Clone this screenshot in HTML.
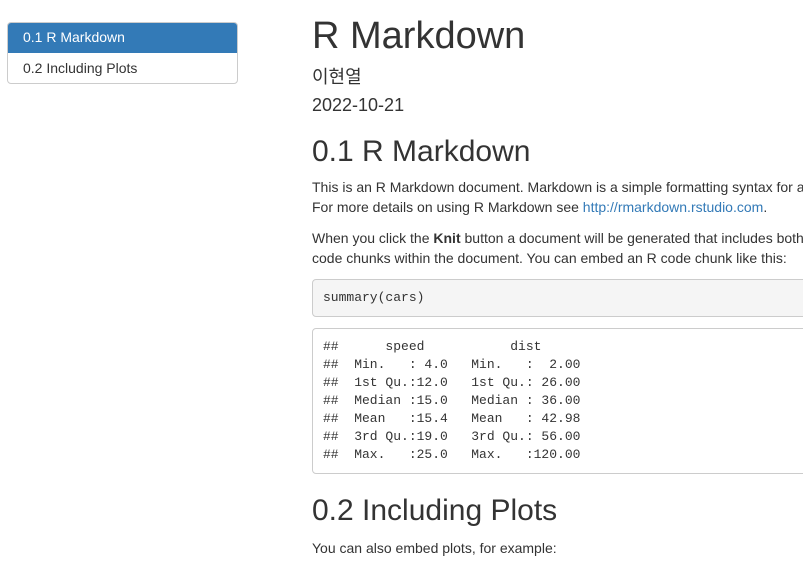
<!DOCTYPE html>
<html><head><meta charset="utf-8"><style>
html,body{margin:0;padding:0;width:803px;height:565px;overflow:hidden;background:#fff;}
body{font-family:"Liberation Sans","Noto Sans CJK KR",sans-serif;color:#333;font-size:14px;position:relative;}
.toc{position:absolute;left:7px;top:22px;width:229px;border:1px solid #ccc;border-radius:4px;overflow:hidden;}
.toc div{height:30px;line-height:30px;padding-left:15px;font-size:14px;}
.toc .a{background:#337ab7;color:#fff;border-bottom:1px solid #337ab7;height:29px;line-height:29px}
.main{position:absolute;left:312px;top:0;width:491px;height:565px;overflow:hidden;}
.t{position:absolute;white-space:nowrap;margin:0;}
pre{position:absolute;margin:0;background:#f5f5f5;border:1px solid #ccc;border-radius:4px;font-family:"Liberation Mono",monospace;font-size:13px;line-height:18px;color:#333;padding:9px 10px;width:700px;}
a{color:#337ab7;text-decoration:none}
</style></head><body>
<div class="toc"><div class="a">0.1 R Markdown</div><div>0.2 Including Plots</div></div>
<div class="main">
<div class="t" style="top:14px;font-size:38px;line-height:44px;font-weight:normal">R Markdown</div>
<div class="t" style="top:65px;font-size:18px;line-height:24px">이현열</div>
<div class="t" style="top:93px;font-size:18px;line-height:24px">2022-10-21</div>
<div class="t" style="top:134px;font-size:30px;line-height:36px">0.1 R Markdown</div>
<div class="t" style="top:177px;line-height:20px">This is an R Markdown document. Markdown is a simple formatting syntax for authoring HTML, PDF, and MS Word documents.<br>For more details on using R Markdown see <a>http://rmarkdown.rstudio.com</a>.</div>
<div class="t" style="top:228px;line-height:20px">When you click the <b>Knit</b> button a document will be generated that includes both content as well as the output of any embedded R<br>code chunks within the document. You can embed an R code chunk like this:</div>
<pre style="top:279px;height:18px">summary(cars)</pre>
<pre style="top:328px;background:#fff;height:126px">##      speed           dist       
##  Min.   : 4.0   Min.   :  2.00  
##  1st Qu.:12.0   1st Qu.: 26.00  
##  Median :15.0   Median : 36.00  
##  Mean   :15.4   Mean   : 42.98  
##  3rd Qu.:19.0   3rd Qu.: 56.00  
##  Max.   :25.0   Max.   :120.00  </pre>
<div class="t" style="top:493px;font-size:30px;line-height:36px">0.2 Including Plots</div>
<div class="t" style="top:538px;line-height:20px">You can also embed plots, for example:</div>
</div>
</body></html>
